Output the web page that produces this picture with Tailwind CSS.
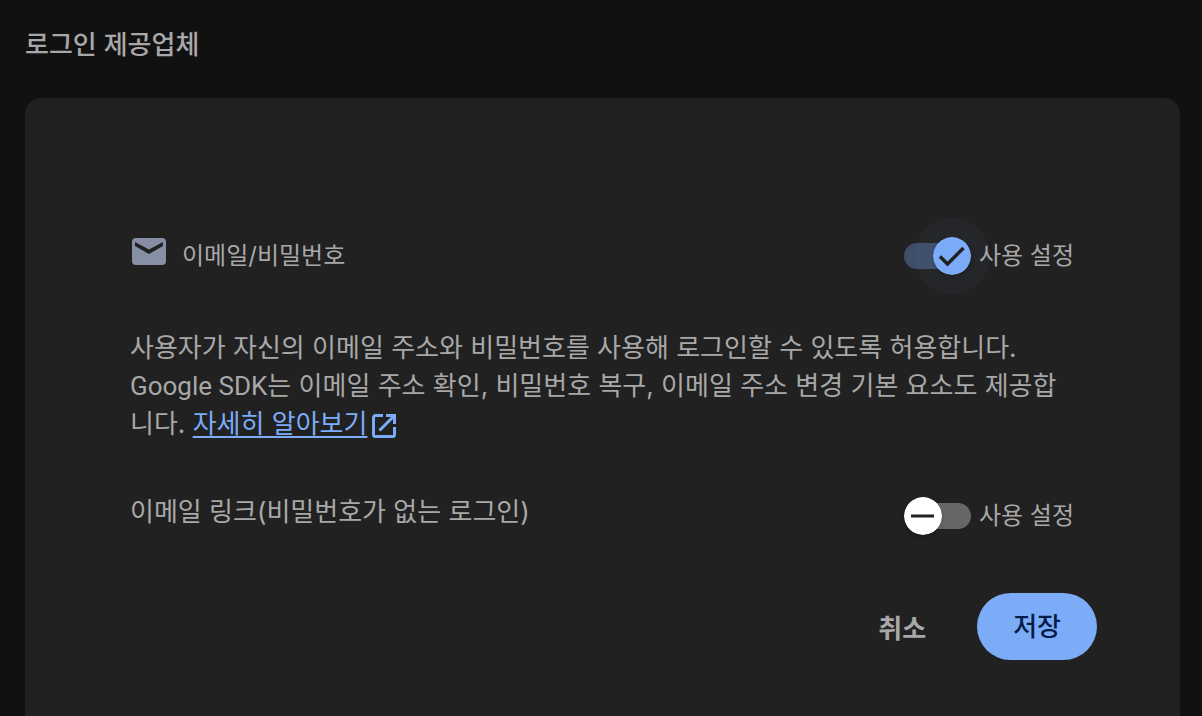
<!DOCTYPE html>
<html lang="ko">
<head>
  <meta charset="UTF-8" />
  <meta name="viewport" content="width=device-width, initial-scale=1.0" />
  <title>로그인 제공업체</title>
  <script src="https://cdn.jsdelivr.net/npm/@tailwindcss/browser@4"></script>
</head>
<body class="min-h-screen flex flex-col bg-[#111111] text-[#a8a8a8] font-[Inter,'Noto_Sans_CJK_KR',sans-serif]">
  <!-- Page title -->
  <h1 class="px-[25px] pt-[25px] text-[26px] leading-10 font-medium">로그인 제공업체</h1>

  <!-- Provider card -->
  <main class="grow mt-[33px] ml-[25px] mr-[22px] rounded-t-2xl bg-[#212121] pt-[120px] pb-14 pl-[105px] pr-[83px]">
    <form>
      <!-- Email / password -->
      <div class="flex items-center justify-between pr-[23px]">
        <div class="flex items-center gap-4">
          <svg class="w-9 h-7 mb-2" viewBox="0 0 36 28" aria-hidden="true">
            <rect x="2" y="0" width="34" height="27" rx="4" fill="#868fa3" />
            <path d="M5 4l14 7.500 14-7.500v4l-14 8-14-8z" fill="#212121" />
          </svg>
          <span class="text-2xl leading-9">이메일/비밀번호</span>
        </div>
        <label class="flex items-center gap-2 text-2xl leading-9">
          <span class="relative flex items-center w-[67px] h-[76px]">
            <input type="checkbox" role="switch" checked class="appearance-none w-full h-[26px] rounded-full bg-[#3f4d68]" />
            <span class="absolute -right-[19px] size-[76px] rounded-full bg-[#7cacf8]/4"></span>
            <svg class="absolute right-0 size-[38px] rounded-full shadow-md" viewBox="0 0 38 38" fill="none" aria-hidden="true">
              <circle cx="19" cy="19" r="19" fill="#7cacf8" />
              <path d="M7 19.500l7.500 7.500L30.500 11" stroke="#212121" stroke-width="3.500" />
            </svg>
          </span>
          사용 설정
        </label>
      </div>

      <p class="mt-[35px] text-[26px] leading-[38px]">
        사용자가 자신의 이메일 주소와 비밀번호를 사용해 로그인할 수 있도록 허용합니다.<br />
        <span class="font-[Roboto]">Google SDK</span>는 이메일 주소 확인, 비밀번호 복구, 이메일 주소 변경 기본 요소도 제공합<br />
        니다.
        <a href="#" class="text-[#7cacf8]"><span class="underline underline-offset-3">자세히 알아보기</span><svg class="inline-block size-[26px] ml-1 align-middle" viewBox="0 0 26 26" fill="none" stroke="#7cacf8" stroke-width="3" aria-hidden="true">
            <path d="M12 2.500H4.500a2 2 0 0 0-2 2v17a2 2 0 0 0 2 2h17a2 2 0 0 0 2-2V14M15 2.500h8.500V11M23 3L8.500 17.500" />
          </svg></a>
      </p>

      <!-- Email link -->
      <div class="flex items-center justify-between mt-[35px] pr-[23px]">
        <span class="pb-2 text-[26px] leading-9">이메일 링크(비밀번호가 없는 로그인)</span>
        <label class="flex items-center gap-2 text-2xl leading-9">
          <span class="relative flex items-center w-[67px] h-[76px]">
            <input type="checkbox" role="switch" class="appearance-none w-full h-[26px] rounded-full bg-[#666666]" />
            <svg class="absolute left-0 size-[38px] rounded-full shadow-md" viewBox="0 0 38 38" fill="none" aria-hidden="true">
              <circle cx="19" cy="19" r="19" fill="#ffffff" />
              <path d="M7 19h23" stroke="#212121" stroke-width="3" />
            </svg>
          </span>
          사용 설정
        </label>
      </div>

      <!-- Actions -->
      <div class="flex items-center justify-end mt-[39px] gap-[51px] text-[26px] leading-9">
        <button type="button" class="pt-1 font-bold">취소</button>
        <button type="submit" class="h-[67px] px-9 rounded-full bg-[#7cacf8] font-medium text-[#041e49]">저장</button>
      </div>
    </form>
  </main>
</body>
</html>
